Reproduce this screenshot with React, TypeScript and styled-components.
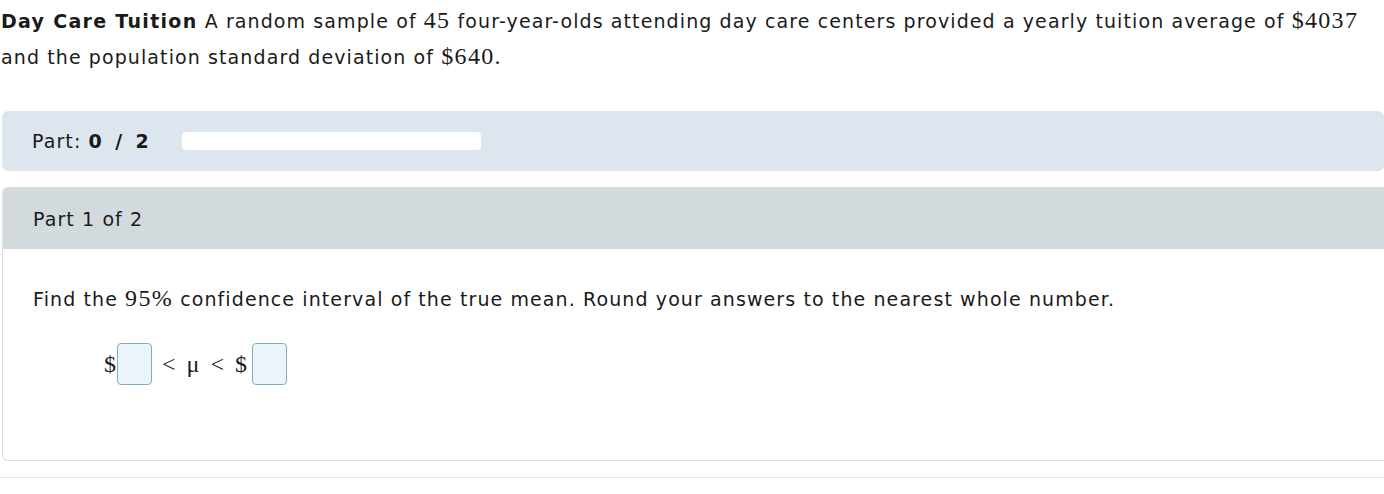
import React from "react";
import styled, { createGlobalStyle } from "styled-components";

const Global = createGlobalStyle`
  html, body { margin: 0; padding: 0; background: #fff; }
  body { font-family: "DejaVu Sans", Verdana, sans-serif; color: #1a1a1a; }
`;

const Page = styled.div`
  width: 1384px;
  display: flex;
  flex-direction: column;
`;

const Intro = styled.p`
  margin: 0;
  padding: 3px 0 0 1px;
  font-size: 19px;
  letter-spacing: 1.1px;
  line-height: 36px;
`;

const Bold = styled.b`
  font-weight: bold;
  letter-spacing: 1.3px;
`;

const Score = styled.b`
  font-weight: bold;
  letter-spacing: 1.4px;
  word-spacing: 4px;
`;

const MathNum = styled.span`
  font-family: "Liberation Serif", "Times New Roman", serif;
  font-size: 24px;
  line-height: 1;
  letter-spacing: 1.3px;
`;

const PartBar = styled.div`
  margin: 36px 0 0 2px;
  height: 60px;
  background: #dde6ef;
  border-radius: 6px;
  display: flex;
  align-items: center;
  padding-left: 30px;
  gap: 32px;
  font-size: 19px;
  letter-spacing: 1.1px;
`;

const Progress = styled.div`
  width: 299px;
  height: 18px;
  background: #fff;
  border-radius: 4px;
`;

const Card = styled.div`
  margin: 16px 0 0 2px;
  height: 272px;
  border: 1px solid #dcdfe2;
  border-right: none;
  border-radius: 6px 0 0 6px;
  display: flex;
  flex-direction: column;
`;

const CardHeader = styled.div`
  height: 61px;
  background: #d3dadd;
  display: flex;
  align-items: center;
  padding-left: 30px;
  font-size: 19px;
  letter-spacing: 1.1px;
  border-top-left-radius: 5px;
`;

const CardBody = styled.div`
  padding: 36px 0 0 30px;
  display: flex;
  flex-direction: column;
`;

const Question = styled.div`
  font-size: 19px;
  letter-spacing: 1.1px;
  line-height: 28px;
`;

const Answer = styled.div`
  margin: 30px 0 0 71px;
  display: flex;
  align-items: center;
  font-family: "Liberation Serif", "Times New Roman", serif;
  font-size: 24px;
`;

const Box = styled.div`
  width: 33px;
  height: 40px;
  margin-left: 1px;
  background: #eaf4f9;
  border: 1px solid #7faebf;
  border-radius: 4px;
`;

const Rel = styled.span`
  margin: 0 3px 0 10px;
  letter-spacing: 1px;
  word-spacing: 3px;
`;

const Rule = styled.div`
  margin-top: 16px;
  height: 1px;
  background: #e2e4e6;
`;

export default function App() {
  return (
    <Page>
      <Global />
      <Intro>
        <Bold>Day Care Tuition</Bold> A random sample of <MathNum>45</MathNum> four-year-olds
        attending day care centers provided a yearly tuition average of{" "}
        <MathNum>$4037</MathNum>
        <br />
        and the population standard deviation of <MathNum>$640.</MathNum>
      </Intro>
      <PartBar>
        <span>
          Part: <Score>0 / 2</Score>
        </span>
        <Progress />
      </PartBar>
      <Card>
        <CardHeader>Part 1 of 2</CardHeader>
        <CardBody>
          <Question>
            Find the <MathNum>95%</MathNum> confidence interval of the true mean. Round your
            answers to the nearest whole number.
          </Question>
          <Answer>
            <span>$</span>
            <Box />
            <Rel>&lt; μ &lt; $</Rel>
            <Box />
          </Answer>
        </CardBody>
      </Card>
      <Rule />
    </Page>
  );
}
